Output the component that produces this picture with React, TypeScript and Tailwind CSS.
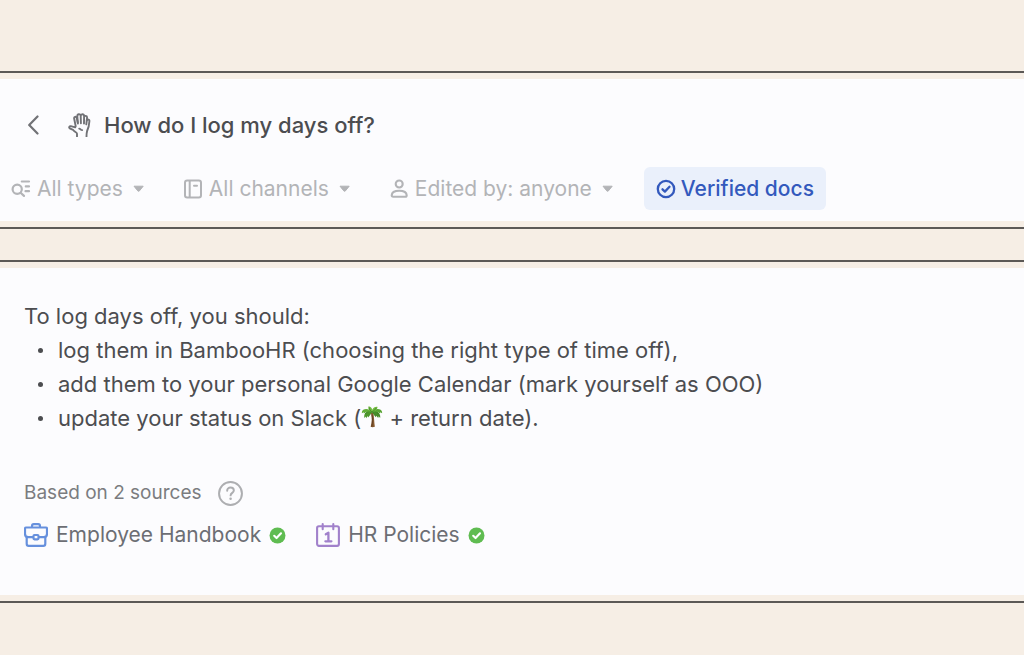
import type { ReactNode } from "react";

function BackIcon() {
  return (
    <svg className="h-5 w-3" viewBox="0 0 12 20" fill="none" stroke="currentColor" strokeWidth="2.200" strokeLinecap="round" strokeLinejoin="round" aria-hidden="true">
      <path d="M9.500 1.500 1.200 10 9.500 18.500" />
    </svg>
  );
}

function HandIcon() {
  return (
    <svg className="h-6 w-6" viewBox="0 0 24 24" fill="none" stroke="currentColor" strokeWidth="1.900" strokeLinecap="round" strokeLinejoin="round" aria-hidden="true">
      <path d="M9 23.500v-2.800c0-1.300-2.800-1.800-3.900-3.800L1.700 15.300c-1-.8-.4-2.400 1.100-2.200l4.400 1.300.5-1.200-1.500-7.500c-.5-2 1.900-2.700 2.600-.9l.9 4.700" />
      <path d="M9.900 10.500 9.300 3.300C9.200.8 12.400.5 12.700 2.700l.2 7.600M12.700 2.900c.1-2.200 3.300-2.200 3.400.1l-.1 7.500M16.100 4.200c.4-2 3.100-1.600 3 .4l-.8 6.800" />
      <path d="M18.900 7.300c.8-1.500 2.800-.8 2.500.9-.2 3.600-.9 6.800-2.300 9.800-.5 1.900-.6 3.500-.6 5.500" />
      <path d="M11.200 15.600c1.400 0 1.400 1.500 3 1.500" />
    </svg>
  );
}

function TypesIcon() {
  return (
    <svg className="h-5 w-5" viewBox="0 0 20 20" fill="none" stroke="currentColor" strokeWidth="2.200" strokeLinecap="round" aria-hidden="true">
      <circle cx="6.200" cy="10.300" r="4.600" />
      <path d="m9.600 13.700 3.400 3.200M10.800 2.500H18M14.800 7.400H18M14.500 12.200H18" />
    </svg>
  );
}

function ChannelsIcon() {
  return (
    <svg className="h-5 w-5" viewBox="0 0 20 20" fill="none" stroke="currentColor" strokeWidth="2" strokeLinecap="round" aria-hidden="true">
      <rect x="2" y="1.500" width="16" height="17" rx="2.200" />
      <path d="M6.700 2v16M11 6.700h3" />
    </svg>
  );
}

function PersonIcon() {
  return (
    <svg className="h-5 w-5" viewBox="0 0 20 20" fill="none" stroke="currentColor" strokeWidth="2.100" strokeLinejoin="round" aria-hidden="true">
      <circle cx="10.200" cy="5" r="3.500" />
      <path d="M2.700 16.300c.2-3.300 3.100-4.500 7.500-4.500s7.300 1.200 7.500 4.500c0 .9-.5 1.500-1.400 1.500H4.100c-.9 0-1.400-.6-1.400-1.500Z" />
    </svg>
  );
}

function VerifiedIcon() {
  return (
    <svg className="h-5 w-5" viewBox="0 0 20 20" fill="none" stroke="currentColor" strokeWidth="2.300" strokeLinecap="round" strokeLinejoin="round" aria-hidden="true">
      <circle cx="10" cy="10" r="8.200" />
      <path d="m6.500 10.300 2.400 2.300 4.600-4.800" />
    </svg>
  );
}

function HelpIcon() {
  return (
    <svg className="h-[25px] w-[25px]" viewBox="0 0 24 24" fill="none" stroke="currentColor" strokeWidth="1.900" strokeLinecap="round" strokeLinejoin="round" aria-hidden="true">
      <circle cx="12" cy="12" r="11" />
      <path d="M8.800 9.300c0-1.900 1.400-3 3.200-3s3.200 1.200 3.200 2.800c0 2.200-3.100 2.400-3.100 4.700" />
      <circle cx="12.100" cy="17.100" r="1.200" fill="currentColor" stroke="none" />
    </svg>
  );
}

function BriefcaseIcon() {
  return (
    <svg className="h-6 w-6 text-[#6690dd]" viewBox="0 0 24 24" fill="none" stroke="currentColor" strokeWidth="2.200" strokeLinejoin="round" aria-hidden="true">
      <path d="M8 4.500V3.200C8 2 8.700 1.200 9.800 1.200h4.400c1.100 0 1.800.8 1.800 2v1.300" />
      <path d="M9.300 14.200H4.200c-2 0-3.200-1.100-3.200-3.400V5.700c0-.7.5-1.200 1.200-1.200h19.600c.7 0 1.200.5 1.200 1.200v5.100c0 2.300-1.200 3.400-3.200 3.400h-5.100" />
      <path d="M2.700 13.700v7.100c0 1.300.8 2.100 2 2.100h14.600c1.200 0 2-.8 2-2.100v-7.100" />
      <rect x="9.500" y="12" width="5" height="4.300" rx="1" />
    </svg>
  );
}

function CalendarIcon() {
  return (
    <svg className="h-6 w-6 text-[#a181cb]" viewBox="0 0 24 24" fill="none" stroke="currentColor" strokeWidth="2.100" strokeLinecap="round" strokeLinejoin="round" aria-hidden="true">
      <rect x="1.100" y="3.300" width="21.800" height="19.600" rx="1.800" />
      <path d="M6.700 1.100v5.200M17.300 1.100v5.200" />
      <path strokeWidth="2.300" d="m9.800 11.300 2.600-1.600v8.400M9.400 18.300h6" />
    </svg>
  );
}

function CheckBadge() {
  return (
    <svg className="h-[17px] w-[17px]" viewBox="0 0 16 16" fill="none" strokeLinecap="round" strokeLinejoin="round" role="img" aria-label="Verified">
      <circle cx="8" cy="8" r="7.500" fill="#5fbc51" />
      <path d="m4.900 8.300 2.200 2.100 4.200-4.500" stroke="white" strokeWidth="2" />
    </svg>
  );
}

function PalmIcon() {
  return (
    <svg className="inline h-[23px] w-[22px] align-[-2px]" viewBox="0 0 24 24" role="img" aria-label="Palm tree">
      <path d="M10.700 7.500c1.400 5 1.400 10-.2 15.700 1.300.7 3.300.6 4.600 0C14.300 18 14.500 12.500 13.200 7Z" fill="#86592f" />
      <path d="M11.900 10c1 4 .8 9-.1 13.200" stroke="#5f3d22" strokeWidth="1" fill="none" />
      <path d="M12 7.500C10.500 5 7 5.500 4.800 8.300c-1.300 1.600-1.400 3.500-1.200 5.300L5.300 12l.2 2 2-2.500.4 1.500L12 7.500Z" fill="#4c962b" />
      <path d="M12 7.500c2-2.300 5.800-1.700 7.700 1 1.300 1.900 1.500 3.300 1.200 5.100l-1.700-1.900-.4 2-2.200-2.600-.5 1.600L12 7.500Z" fill="#478c29" />
      <path d="M12 7.300C9.700 4 5.700 3 3 4.300 1.200 5.200.8 6.900 1 8.500l2-1.100.1 1.400 3-2.100.2 1.300 5.700-.7Z" fill="#62ad38" />
      <path d="M12 7.300c2.300-3.300 6.200-4.300 8.900-3 1.800.9 2.400 2.600 2.100 4.200l-2-1.100-.3 1.400-2.800-2-.4 1.300L12 7.300Z" fill="#58a433" />
      <path d="M12 7.500C9 6.300 7.400 3.500 8.300.9c2.300.4 3.600 2 4 3.800 1-2.200 3.200-3.700 5.800-3.200C17.500 4.400 15.500 7 12 7.500Z" fill="#71ba40" />
      <path d="M12 7c-1.800-1-3-3-3-4.800M12 7c2-.9 3.600-2.400 4.600-4.300M11.500 7.500C9 6.600 6 6.900 4.200 9.500M12.500 7.500c3-.9 5.500 0 7 2.200" fill="none" stroke="#357a22" strokeWidth=".7" />
    </svg>
  );
}

function Panel({ children }: { children: ReactNode }) {
  return (
    <section className="border-y-2 border-[#5c5956] py-1.5">
      <div className="bg-[#fcfcfe]">{children}</div>
    </section>
  );
}

function Filter({ icon, name, value }: { icon: ReactNode; name: string; value: string }) {
  return (
    <label className="flex items-center gap-1.5">
      {icon}
      <select aria-label={name} className="field-sizing-content appearance-none bg-transparent text-[21px] leading-[27px]">
        <option>{value}</option>
      </select>
      <svg className="ml-0.5 h-4 w-4" viewBox="0 0 16 16" fill="currentColor" stroke="currentColor" strokeWidth="1" strokeLinejoin="round" aria-hidden="true">
        <path d="M3 5.200h9.200l-3.800 4.700q-.8.800-1.600 0Z" />
      </svg>
    </label>
  );
}

function Source({ icon, name }: { icon: ReactNode; name: string }) {
  return (
    <li>
      <a href="#" className="flex items-center gap-2">
        {icon}
        <span>{name}</span>
        <CheckBadge />
      </a>
    </li>
  );
}

export default function App() {
  return (
    <main className="flex min-h-screen flex-col gap-[31px] overflow-x-hidden bg-[#f6eee5] pt-[71px] pb-12 font-['Inter',sans-serif] text-[#4c4d50]">
      <Panel>
        <header className="flex items-center px-7 pt-7">
          <button type="button" aria-label="Back" className="text-[#717276]">
            <BackIcon />
          </button>
          <span className="ml-7 text-[#717276]">
            <HandIcon />
          </span>
          <h1 className="ml-3 text-[22px] leading-9 font-[450]">How do I log my days off?</h1>
        </header>
        <div className="flex items-center gap-9 px-[11px] pt-6 pb-[11px] whitespace-nowrap text-[#b3b4b7]">
          <Filter icon={<TypesIcon />} name="Type" value="All types" />
          <Filter icon={<ChannelsIcon />} name="Channel" value="All channels" />
          <Filter icon={<PersonIcon />} name="Editor" value="Edited by: anyone" />
          <button type="button" aria-pressed="true" className="-ml-2 flex items-center gap-[5px] rounded-md bg-[#eaf0fb] px-3 py-2 text-[21px] leading-[27px] font-[450] text-[#3359bd]">
            <VerifiedIcon />
            Verified docs
          </button>
        </div>
      </Panel>

      <Panel>
        <article className="px-6 pt-[31px] pb-11">
          <div className="text-[22px] leading-[34px]">
            <p>To log days off, you should:</p>
            <ul>
              {[
                "log them in BambooHR (choosing the right type of time off),",
                "add them to your personal Google Calendar (mark yourself as OOO)",
                <>update your status on Slack (<PalmIcon /> + return date).</>,
              ].map((item, i) => (
                <li key={i} className="flex items-center gap-[15px] pl-3.5">
                  <span className="h-[5px] w-[5px] rounded-full bg-current" />
                  <span>{item}</span>
                </li>
              ))}
            </ul>
          </div>
          <div className="mt-[42px] flex items-center gap-4 text-[19px] leading-8 text-[#7b7c80]">
            <p>Based on 2 sources</p>
            <button type="button" aria-label="About sources" className="text-[#adaeb1]">
              <HelpIcon />
            </button>
          </div>
          <ul className="mt-2.5 flex items-center gap-[30px] text-[21px] leading-8 text-[#6c6e74]">
            <Source icon={<BriefcaseIcon />} name="Employee Handbook" />
            <Source icon={<CalendarIcon />} name="HR Policies" />
          </ul>
        </article>
      </Panel>
    </main>
  );
}
